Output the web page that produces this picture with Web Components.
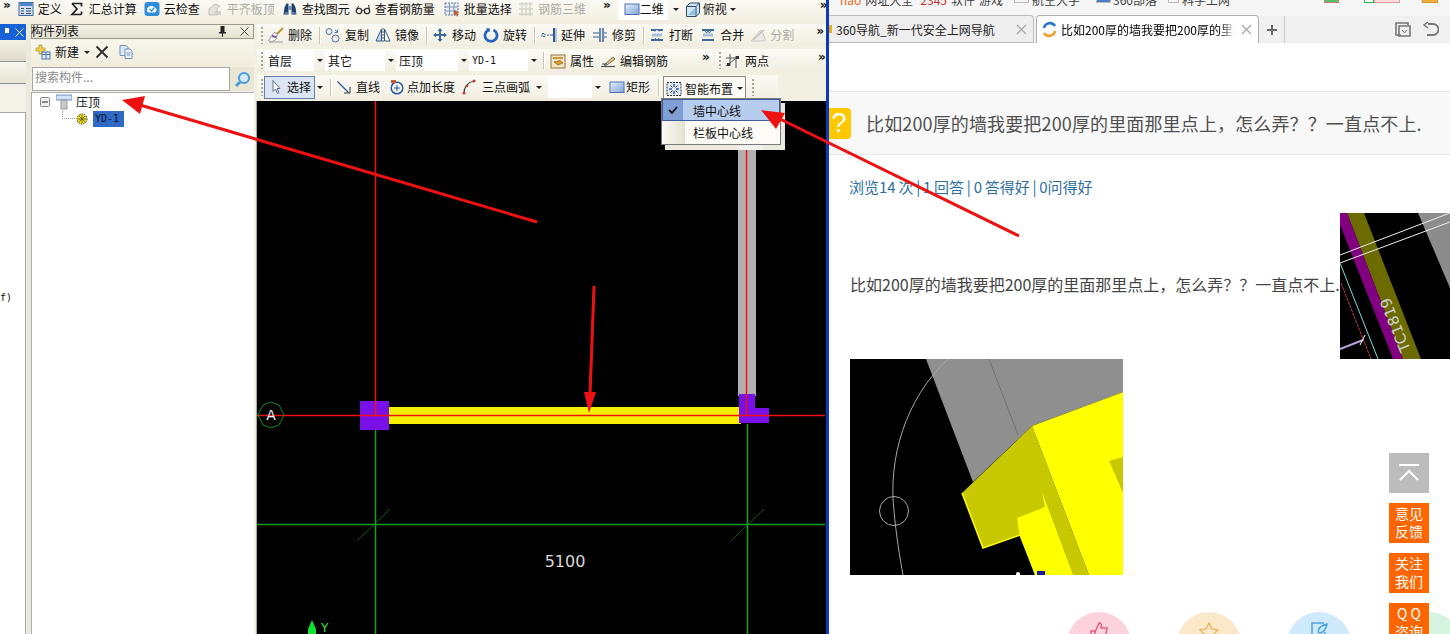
<!DOCTYPE html>
<html lang="zh">
<head>
<meta charset="utf-8">
<title>压顶</title>
<style>
  html, body { margin: 0; height: 100%; overflow: hidden; background: #fff; }
  body { font: 12px "Noto Sans CJK SC", "Liberation Sans", sans-serif; }
</style>
</head>
<body>
<page-shell></page-shell>
<script>
/**
 * Small helper, every element gets an open shadow root cloned from a template.
 *
 * @param {string} name - Tag name.
 * @param {string} html - Shadow markup with its style.
 * @param {Function} [setup] - Called when the element is connected.
 */
function define (name, html, setup) {
  const template = document.createElement('template')
  template.innerHTML = html
  customElements.define(name, class extends HTMLElement {
    constructor () {
      super()
      this.attachShadow({ mode: 'open' }).appendChild(template.content.cloneNode(true))
    }

    connectedCallback () {
      if (setup) setup(this)
    }
  })
}

// 16x16 toolbar icons
const icons = {
  define: '<rect x="1" y="1.5" width="14" height="13" fill="#cfe0f5" stroke="#3d6fa8"/><rect x="1.5" y="2" width="13" height="3" fill="#4f86c6"/><path d="M3 7.5h3M3 10h3M3 12.5h3M8 7.5h5M8 10h5M8 12.5h5" stroke="#3d4f66"/>',
  sigma: '<path d="M3 2.5h9.5v3M12.5 13.500v-3M12.500 13.500H3l5-5.500-5-5.500" fill="none" stroke="#222" stroke-width="1.700"/>',
  cloud: '<rect x="0.500" y="1" width="15" height="14" rx="3" fill="#2f8fdc"/><path d="M3 9c0-3 3-4.500 5-4 2 .5 4 1.500 4.500 3.500 0 2-1 3-3 3H5c-1.500 0-2-1-2-2.500z" fill="#fff"/><path d="M5.500 8l2 2 3-3.500" fill="none" stroke="#2f8fdc" stroke-width="1.400"/>',
  align: '<path d="M2 14V8l6-5 5 2-3 3v6z" fill="#e2e2dc" stroke="#c2c2ba"/><path d="M8 14h6v-4H8z" fill="#d0d0c8"/>',
  binoculars: '<path d="M1.500 13.500l1-7 2-4h2v11zM14.500 13.500l-1-7-2-4h-2v11z" fill="#1d3f70"/><rect x="6.500" y="5" width="3" height="4" fill="#6f8fb8"/><path d="M2.500 12h4M9.500 12h4" stroke="#8fb0d8"/>',
  glasses: '<circle cx="4" cy="10" r="2.700" fill="none" stroke="#333" stroke-width="1.300"/><circle cx="12" cy="10" r="2.700" fill="none" stroke="#333" stroke-width="1.300"/><path d="M6.500 10c1-1 2-1 3 0M1.500 9l2-4M14.500 9l-1-5" fill="none" stroke="#333"/>',
  batch: '<rect x="1" y="2" width="13" height="12" fill="#e9eef6" stroke="#5f7fa6" stroke-dasharray="2 1"/><path d="M1 6h13M1 10h13M5.500 2v12M10 2v12" stroke="#7f96b5"/><path d="M10 9l5 3-2 1 1 2-1 .5-1-2-2 1z" fill="#c8582a"/>',
  rebar3d: '<path d="M1 3h14M1 8h14M1 13h14M4 1v14M8 1v14M12 1v14" stroke="#c6c6be"/>',
  rect: '<defs><linearGradient id="g" x1="0" y1="0" x2="1" y2="1"><stop offset="0" stop-color="#e6effb"/><stop offset="1" stop-color="#7fa3dc"/></linearGradient></defs><rect x="1" y="3" width="14" height="10.500" fill="url(#g)" stroke="#4f73ad"/>',
  cube: '<path d="M1.500 5.500L5 2h9.500v10L11 15.500H1.500z" fill="#cfe6f6" stroke="#2d4a66"/><path d="M1.500 5.500H11v10M11 5.500L14.500 2" fill="none" stroke="#2d4a66"/><path d="M3 14l7-7v7z" fill="#8fc3e6"/>',
  del: '<path d="M15 1L8 8" stroke="#c8912f" stroke-width="2"/><path d="M9.500 6.500l-3-1-3.500 4c-.5 2-2 3-2.500 4 2 1.500 6 1 7.500-1.500z" fill="#fff" stroke="#707070" stroke-width=".8"/><path d="M4 9l4 1" stroke="#7c4fb0" stroke-width="2"/><path d="M1 15h14" stroke="#9b9b9b"/>',
  copy: '<circle cx="4" cy="4.500" r="3" fill="#e8eff7" stroke="#58708e"/><circle cx="10.500" cy="11.500" r="3.500" fill="#e8eff7" stroke="#58708e"/><path d="M10 3l2.500 2M12.500 2.500v3h-3" fill="none" stroke="#3a79bd"/>',
  mirror: '<path d="M6.500 2v12H1z" fill="#c6d8ee" stroke="#34587f"/><path d="M9.500 2v12H15z" fill="#fff" stroke="#34587f"/><path d="M8 1v14" stroke="#34587f" stroke-dasharray="2 1"/>',
  move: '<path d="M8 1l2.500 3H9v3h3V5.500L15 8l-3 2.500V9H9v3h1.500L8 15l-2.500-3H7V9H4v1.500L1 8l3-2.500V7h3V4H5.500z" fill="#3d6a9e"/>',
  rotate: '<path d="M5.500 3a6 6 0 1 0 5 0" fill="none" stroke="#2a63c2" stroke-width="2.800"/><path d="M3 1l4 .5-.5 4z" fill="#2a63c2"/>',
  extend: '<path d="M1 6.500h3v3H1zM6 8h4" fill="none" stroke="#2a5aa0" stroke-dasharray="2 1"/><path d="M13 1v14" stroke="#2a5aa0" stroke-width="2"/><path d="M10 8h2" stroke="#2a5aa0"/><path d="M15 1v14" stroke="#7f9cc8"/>',
  trim: '<path d="M8 1v14M11 1v14" stroke="#2a5aa0" stroke-width="1.400"/><path d="M1 6h6M1 10h6M12 6h3M12 10h3" stroke="#2a5aa0"/>',
  break: '<path d="M2 3h5M9 3h5M2 13h12" stroke="#3d6a9e" stroke-width="2"/><path d="M3 8h10" stroke="#a9bfd8" stroke-width="3"/><path d="M6 4.500L8 2l2 2.500M6 11l2 2.500 2-2.500" fill="none" stroke="#3d6a9e"/>',
  merge: '<path d="M2 3h12M2 13h12" stroke="#3d6a9e" stroke-width="2"/><path d="M3 8h10" stroke="#a9bfd8" stroke-width="3"/><path d="M5 4l1.500 2L8 4M8 4l1.500 2L11 4" fill="none" stroke="#3d6a9e"/>',
  split: '<path d="M1 14h14v-3L11 3z" fill="#ecece6" stroke="#c6c6be"/><path d="M3 13l11-10" stroke="#c6c6be" stroke-width="1.500"/>',
  props: '<rect x="1" y="2" width="14" height="13" fill="#f4e6c4" stroke="#94743c"/><path d="M3 5h10" stroke="#c89a3c" stroke-width="2"/><path d="M4 9l4 3 5-2-3-2.500z" fill="#d89b2c" stroke="#74521e" stroke-width=".6"/>',
  edit: '<path d="M1 13.500h14" stroke="#555" stroke-width="1.200"/><path d="M4 12l9-8 2 2-9 6.500z" fill="#d8c69a" stroke="#8a6d3a"/><path d="M2 11h5" stroke="#2e4f78"/>',
  twopts: '<path d="M1 13L14 3M5 1v12M11 3v12M1 5h12" stroke="#555" fill="none"/><rect x="2" y="10" width="3" height="3" fill="#333"/><rect x="11" y="3" width="3" height="3" fill="#333"/>',
  cursor: '<path d="M5 1.500v11l2.500-2.500 2 4.500 1.500-.7-2-4.300H12z" fill="#fff" stroke="#5f7490"/>',
  line: '<path d="M1.500 2.500l11 11" stroke="#2a5aa0" stroke-width="1.200"/><path d="M14 8v6H8" fill="none" stroke="#333"/>',
  ptlen: '<circle cx="8" cy="9" r="5.800" fill="none" stroke="#2a5aa0" stroke-width="1.500"/><path d="M8 6v6M5 9h6" stroke="#2a5aa0"/><path d="M2 1h5v3H2z" fill="#c85a38"/>',
  arc3: '<path d="M3 14C3 8 7 3 13 2" fill="none" stroke="#444" stroke-width="1.200"/><circle cx="3" cy="14" r="1.500" fill="#c83838"/><circle cx="6" cy="7" r="1.300" fill="#c83838"/><circle cx="13" cy="2" r="1.500" fill="#c83838"/>',
  smart: '<rect x="1" y="1.500" width="14" height="13" fill="#e3ebf7" stroke="#333" stroke-dasharray="2 1"/><path d="M8 3v3M8 10v3M3 8h3M10 8h3" stroke="#2a5aa0" stroke-width="1.500"/><path d="M4.500 4.500l2 2M11.500 4.500l-2 2M4.500 11.500l2-2M11.500 11.500l-2-2" stroke="#333"/>',
  newpart: '<path d="M1 4h3V1h3v3h3v3H7v3H4V7H1z" fill="#f2cf52" stroke="#b59227" stroke-width=".7"/><rect x="7" y="8" width="8" height="7" fill="#e3edf9" stroke="#4f78ad"/><path d="M7 10.500h8M11 8v7" stroke="#4f78ad"/>',
  xmark: '<path d="M2.500 2.500l11 11M13.500 2.500l-11 11" stroke="#2b2b2b" stroke-width="1.800"/>',
  docs: '<path d="M2 1.500h6l2 2v8H2z" fill="#dbe8f8" stroke="#6e8fb8"/><path d="M7 5h5l2 2v7.500H7z" fill="#f2f6fc" stroke="#6e8fb8"/><path d="M8.500 9h4M8.500 11h4" stroke="#6e8fb8"/>'
}

define('tool-btn', `
  <style>
    :host { display: inline-flex; align-items: center; gap: 4px; padding: 0 3px; height: 100%; white-space: nowrap; line-height: 1; flex: none; }
    :host([disabled]) { color: #adada5; }
    svg { width: 16px; height: 16px; flex: none; }
    .caret { width: 0; height: 0; border: 3px solid transparent; border-top: 3px solid #222; border-bottom: 0; display: none; margin-left: 1px; }
    :host([caret]) .caret { display: block; }
  </style>
  <svg viewBox="0 0 16 16"></svg><slot></slot><i class="caret"></i>
`, el => {
  el.shadowRoot.querySelector('svg').innerHTML = icons[el.getAttribute('icon')] || ''
})

define('tool-sep', `
  <style>:host { display: block; flex: none; width: 1px; height: 17px; margin: 0 2px 0 4px; background: #c8c5b5; border-right: 1px solid #fff; box-sizing: content-box; }</style>
`)

define('tool-grip', `
  <style>:host { display: block; flex: none; width: 2px; height: 17px; margin: 0 3px 0 4px; background: repeating-linear-gradient(#a8a698 0 2px, transparent 2px 4px); }</style>
`)

define('tool-more', `
  <style>:host { display: block; flex: none; font: bold 12px/1 "DejaVu Sans", sans-serif; color: #111; letter-spacing: -1px; transform: translateY(-4px); }</style>
  &raquo;
`)

define('tool-combo', `
  <style>
    :host { display: flex; flex: none; align-items: center; height: 21px; }
    .txt { flex: 1; height: 100%; background: #fff; display: flex; align-items: center; padding-left: 3px; box-sizing: border-box; white-space: nowrap; }
    .arr { flex: none; width: 11px; display: flex; justify-content: center; }
    i { border: 3px solid transparent; border-top: 3px solid #222; border-bottom: 0; }
  </style>
  <div class="txt"><slot></slot></div><div class="arr"><i></i></div>
`)

define('cad-toolbar', `
  <style>
    :host { display: flex; align-items: center; flex: none; box-sizing: border-box; background: linear-gradient(#fbfaf4, #f1eee0); white-space: nowrap; }
  </style>
  <slot></slot>
`)

define('smart-menu', `
  <style>
    :host { display: block; position: absolute; left: 404px; top: 74px; width: 118px; height: 45px; background: #fcfbf6; border: 1px solid #7a7a7a; box-shadow: 4px 5px 0 rgba(248, 246, 236, .95); z-index: 3; }
    .strip { position: absolute; left: 0; top: 0; bottom: 0; width: 23px; background: linear-gradient(90deg, #fbfaf5, #e4e1d0); }
    .row { position: relative; height: 22px; display: flex; align-items: center; padding-left: 31px; }
    .on { background: #b7cdee; outline: 1px solid #3c5c9c; outline-offset: -1px; }
    .chk { position: absolute; left: 1px; top: 1px; bottom: 1px; width: 20px; background: #7f9fd6; display: flex; align-items: center; justify-content: center; }
  </style>
  <div class="strip"></div>
  <div class="row on"><span class="chk"><svg width="10" height="8" viewBox="0 0 10 8"><path d="M1 4l3 3 5-6" fill="none" stroke="#111" stroke-width="1.800"/></svg></span>墙中心线</div>
  <div class="row">栏板中心线</div>
`)

define('cad-canvas', `
  <style>
    :host { display: block; flex: 1; min-height: 0; background: #000; box-shadow: -1px 0 0 #a8a8a8; }
    svg { display: block; }
    text { font-family: "DejaVu Sans", sans-serif; }
  </style>
  <svg width="568" height="533" viewBox="257 101 568 533">
    <rect x="738" y="146" width="18" height="250" fill="#b0b0b0"/>
    <rect x="743" y="145" width="20" height="5" fill="#5b9be0"/>
    <rect x="389" y="407" width="352" height="17" fill="#f5f000"/>
    <rect x="360" y="401" width="29" height="29" fill="#7a10e8"/>
    <path d="M739 394h16v14h14v15h-30z" fill="#7a10e8"/>
    <path d="M375.500 430V634M747.500 424V634M257 524.500H825" stroke="#14a01a" stroke-width="1.500"/>
    <path d="M357 541l33-32M731 541l33-32" stroke="#0f7a14" stroke-width=".8"/>
    <path d="M375.500 101V415M746.500 150V415M257 415.500H825" stroke="#f01010" stroke-width="1.500"/>
    <polygon points="271,402 279,405 284,415 279,425 271,428 263,425 258,415 263,405" fill="none" stroke="#128a18"/>
    <text x="271" y="420" text-anchor="middle" font-size="14" fill="#f2f2f2">A</text>
    <text x="565" y="567" text-anchor="middle" font-size="16" fill="#d8d8d8">5100</text>
    <path d="M312 620l4 9v5h-8v-5z" fill="#10e030"/>
    <text x="321" y="632" font-size="12" fill="#3ce04a">Y</text>
  </svg>
`)

define('part-panel', `
  <style>
    :host { display: flex; flex-direction: column; flex: none; width: 223px; min-height: 0; }
    .title { flex: none; height: 13px; line-height: 13px; margin-bottom: 1px; background: linear-gradient(#f5f3e8, #e2dfce); border: 1px solid #9a9a8c; display: flex; align-items: center; justify-content: space-between; }
    .title b { font-weight: normal; font-size: 12px; margin-left: -1px; padding-bottom: 2px; }
    .title span { display: flex; gap: 13px; padding-right: 4px; align-items: center; font-size: 11px; color: #333; }
    .tools { flex: none; height: 26px; display: flex; align-items: center; box-sizing: border-box; padding: 0 0 2px 1px; background: linear-gradient(#f8f6ec, #f0eddd); }
    .tools tool-btn { padding-right: 0; }
    .icon { width: 16px; height: 16px; display: block; }
    .search { flex: none; height: 24px; display: flex; margin: 1px 0; padding-left: 1px; background: #f0eddd; }
    .search div { flex: 1; background: #fff; border: 1px solid #a6a6a0; box-sizing: border-box; color: #8a8a8a; line-height: 18px; padding-left: 2px; }
    .search span { flex: none; width: 24px; display: flex; align-items: center; justify-content: center; background: #e9e6d6; }
    .tree { flex: 1; background: #fff; border: 1px solid #a9adb4; border-width: 1px 0 0 1px; padding: 0 0 0 8px; }
    .node { height: 17px; display: flex; align-items: center; }
    .mono { font: 10px/16px "DejaVu Sans Mono", monospace; color: #06122e; background: #316ac5; width: 31px; height: 16px; padding-left: 2px; box-sizing: border-box; }
    .dots { width: 13px; height: 8px; margin-left: 22px; border: 1px dotted #9a9a9a; border-width: 0 0 1px 1px; margin-top: -8px; box-sizing: border-box; }
  </style>
  <div class="title"><b>构件列表</b><span><svg width="9" height="11" viewBox="0 0 9 11"><path d="M2.500 0h4v6H8v1.500H5V11H4V7.500H1V6h1.500z" fill="#222"/></svg><svg width="9" height="9" viewBox="0 0 9 9"><path d="M.5 .5l8 8M8.500 .5l-8 8" stroke="#444"/></svg></span></div>
  <div class="tools">
    <tool-btn icon="newpart" caret>新建</tool-btn>
    <svg class="icon" style="margin-left:4px" viewBox="0 0 16 16"></svg>
    <svg class="icon" style="margin-left:8px" viewBox="0 0 16 16"></svg>
  </div>
  <div class="search">
    <div>搜索构件...</div>
    <span><svg width="17" height="17" viewBox="0 0 17 17"><circle cx="10" cy="7" r="5" fill="#d4e8f8" stroke="#4a9ad8" stroke-width="2"/><path d="M6 11l-4 4" stroke="#4a9ad8" stroke-width="3"/></svg></span>
  </div>
  <div class="tree">
    <div class="node">
      <svg width="10" height="10" viewBox="0 0 10 10"><rect x=".5" y=".5" width="9" height="9" rx="1" fill="#eee" stroke="#888"/><path d="M2 5h6" stroke="#222"/></svg>
      <svg style="margin:0 4px 0 6px" width="16" height="16" viewBox="0 0 16 16"><rect x="0" y="1" width="16" height="5" fill="#cfe0f8" stroke="#6f93c8"/><rect x="5" y="6" width="6" height="9" fill="#c9c9c9" stroke="#9a9a9a"/></svg>
      压顶
    </div>
    <div class="node">
      <span class="dots"></span>
      <svg style="margin:0 5px 0 1px" width="12" height="12" viewBox="0 0 12 12"><circle cx="6" cy="6" r="5" fill="#f5e61e" stroke="#333" stroke-dasharray="1.500 1"/><path d="M6 2v8M2 6h8M3 3l6 6M9 3l-6 6" stroke="#55520a" stroke-width=".8"/></svg>
      <span class="mono">YD-1</span>
    </div>
  </div>
`, el => {
  const marks = el.shadowRoot.querySelectorAll('.icon')
  marks[0].innerHTML = icons.xmark
  marks[1].innerHTML = icons.docs
})

define('dock-stub', `
  <style>
    :host { display: flex; flex-direction: column; flex: none; width: 26px; border-right: 5px solid #eceadb; box-sizing: content-box; background: #f7f6ef; }
    .bar { height: 16px; background: #1660d8; color: #fff; display: flex; justify-content: flex-end; align-items: center; gap: 6px; padding-right: 2px; font-size: 10px; }
    .a { height: 21px; background: linear-gradient(#f3f1e6, #dedbc9); border-bottom: 1px solid #8f9295; }
    .b { height: 21px; background: linear-gradient(#f9f8f0, #e6e3d3); border-bottom: 1px solid #8f9295; }
    .c { height: 28px; background: #f5f3e9; border-bottom: 1px solid #a3a7ae; }
    .d { flex: 1; background: #fff; position: relative; border-right: 1px solid #a3a7ae; }
    .d span { position: absolute; left: 0; top: 179px; font: 10px/12px "DejaVu Sans Mono", monospace; }
  </style>
  <div class="bar"><svg width="5" height="8" viewBox="0 0 5 8"><path d="M1 0h4v5H1z" fill="#fff"/></svg><svg width="9" height="9" viewBox="0 0 9 9"><path d="M.5 .5l8 8M8.500 .5l-8 8" stroke="#fff"/></svg></div>
  <div class="a"></div><div class="b"></div><div class="c"></div>
  <div class="d"><span>f)</span></div>
`)

define('cad-app', `
  <style>
    :host { display: flex; flex-direction: column; flex: none; width: 826px; height: 634px; background: #f2efe3; color: #111; overflow: hidden; }
    .top { height: 24px; padding-bottom: 6px; }
    .body { flex: 1; min-height: 0; display: flex; }
    .main { position: relative; flex: 1; min-width: 0; margin-left: 3px; display: flex; flex-direction: column; }
    .r1 { height: 22px; margin-bottom: 3px; }
    .r2 { height: 23px; margin-bottom: 3px; background: none; }
    .r3 { height: 26px; width: 521px; padding-bottom: 2px; }
    .seg { display: flex; align-items: center; height: 100%; background: linear-gradient(#fbfaf4, #f1eee0); }
    .picked { box-sizing: border-box; height: 23px; width: 51px; background: #dbe5f3; border: 1px solid #6480a8; padding: 0; }
    .smart { box-sizing: border-box; height: 24px; margin-top: 2px; background: #fbfaf4; border: 1px solid #8c8c84; border-bottom: 0; padding: 0 2px; gap: 3px; }
    .arrow { border: 3px solid transparent; border-top: 3px solid #222; border-bottom: 0; flex: none; }
    .two { background: #fff; height: 22px; padding-right: 4px; }
  </style>
  <cad-toolbar class="top">
    <tool-more style="margin-left:3px;margin-right:5px"></tool-more>
    <tool-btn icon="define">定义</tool-btn>
    <tool-btn icon="sigma" style="margin-left:1px">汇总计算</tool-btn>
    <tool-btn icon="cloud" style="margin-left:1px">云检查</tool-btn>
    <tool-btn icon="align" disabled style="margin-left:1px">平齐板顶</tool-btn>
    <tool-btn icon="binoculars" style="margin-left:1px">查找图元</tool-btn>
    <tool-btn icon="glasses" style="margin-left:-1px">查看钢筋量</tool-btn>
    <tool-btn icon="batch" style="margin-left:3px">批量选择</tool-btn>
    <tool-btn icon="rebar3d" disabled>钢筋三维</tool-btn>
    <tool-more style="margin-left:14px;margin-right:6px"></tool-more>
    <tool-btn icon="rect" class="two" style="margin-left:2px;padding-left:6px;gap:0">二维</tool-btn>
    <i class="arrow" style="margin-left:5px"></i>
    <tool-btn icon="cube" style="margin-left:3px;gap:2px" caret>俯视</tool-btn>
    <tool-more style="margin-left:81px"></tool-more>
  </cad-toolbar>
  <div class="body">
    <dock-stub></dock-stub>
    <part-panel></part-panel>
    <div class="main">
      <cad-toolbar class="r1">
        <tool-grip style="margin-right:2px"></tool-grip>
        <tool-btn icon="del">删除</tool-btn>
        <tool-sep style="margin-right:1px"></tool-sep>
        <tool-btn icon="copy">复制</tool-btn>
        <tool-btn icon="mirror">镜像</tool-btn>
        <tool-sep style="margin:0 1px 0 4px"></tool-sep>
        <tool-btn icon="move">移动</tool-btn>
        <tool-btn icon="rotate" style="margin-left:1px">旋转</tool-btn>
        <tool-sep></tool-sep>
        <tool-btn icon="extend">延伸</tool-btn>
        <tool-btn icon="trim" style="margin-left:1px">修剪</tool-btn>
        <tool-sep style="margin-right:1px"></tool-sep>
        <tool-btn icon="break">打断</tool-btn>
        <tool-btn icon="merge" style="margin-left:1px">合并</tool-btn>
        <tool-btn icon="split" disabled>分割</tool-btn>
        <tool-more style="margin-left:19px"></tool-more>
      </cad-toolbar>
      <cad-toolbar class="r2">
        <div class="seg" style="width:457px">
          <tool-grip style="margin-right:2px"></tool-grip>
          <tool-combo style="width:60px">首层</tool-combo>
          <tool-combo style="width:71px">其它</tool-combo>
          <tool-combo style="width:73px">压顶</tool-combo>
          <tool-combo style="width:70px;font:10px 'DejaVu Sans Mono',monospace">YD-1</tool-combo>
          <tool-sep></tool-sep>
          <tool-btn icon="props">属性</tool-btn>
          <tool-btn icon="edit">编辑钢筋</tool-btn>
          <tool-more style="margin-left:31px"></tool-more>
        </div>
        <div class="seg" style="flex:1;margin-left:1px">
          <tool-grip style="margin-right:1px"></tool-grip>
          <tool-btn icon="twopts">两点</tool-btn>
          <tool-more style="margin-left:46px"></tool-more>
        </div>
      </cad-toolbar>
      <cad-toolbar class="r3">
        <tool-grip style="margin-right:1px"></tool-grip>
        <tool-btn icon="cursor" class="picked" style="padding-left:3px;gap:3px">选择</tool-btn>
        <i class="arrow" style="margin-left:2px"></i>
        <tool-sep style="margin:0 1px 0 7px"></tool-sep>
        <tool-btn icon="line">直线</tool-btn>
        <tool-btn icon="ptlen" style="margin-left:3px;gap:2px">点加长度</tool-btn>
        <tool-btn icon="arc3" style="gap:5px" caret>三点画弧</tool-btn>
        <tool-combo style="width:55px;margin-left:3px;height:22px"></tool-combo>
        <tool-btn icon="rect" style="margin-left:3px;gap:1px">矩形</tool-btn>
        <tool-sep style="margin:0 3px 0 5px"></tool-sep>
        <tool-btn icon="smart" class="smart" caret>智能布置</tool-btn>
        <tool-grip style="margin-left:6px"></tool-grip>
      </cad-toolbar>
      <cad-canvas></cad-canvas>
      <smart-menu></smart-menu>
    </div>
  </div>
`)

define('browser-tab', `
  <style>
    :host { display: flex; align-items: center; flex: none; box-sizing: border-box; height: 28px; background: #eeeeee; border: 1px solid #bdbdbd; border-left: 0; border-bottom: 1px solid #b5b5b5; border-radius: 0 4px 0 0; position: relative; color: #222; }
    :host([active]) { background: #fff; border: 1px solid #b0b0b0; border-bottom: 0; border-radius: 4px 4px 0 0; color: #000; }
    .txt { flex: 1; min-width: 0; overflow: hidden; white-space: nowrap; }
    :host([active]) .txt { -webkit-mask-image: linear-gradient(90deg, #000 92%, transparent); mask-image: linear-gradient(90deg, #000 92%, transparent); }
    .x { flex: none; width: 11px; height: 11px; margin: 0 6px; }
  </style>
  <slot name="icon"></slot>
  <div class="txt"><slot></slot></div>
  <svg class="x" viewBox="0 0 11 11"><path d="M1 1l9 9M10 1l-9 9" stroke="#a8a8a8" stroke-width="1.300"/></svg>
`)

define('rail-btn', `
  <style>
    :host { display: flex; align-items: center; justify-content: center; flex: none; width: 40px; height: 40px; box-sizing: border-box; padding-bottom: 3px; background: #ff6600; color: #fff; font-size: 14px; line-height: 18px; text-align: center; }
    :host([plain]) { background: #bcbcbc; padding-bottom: 0; }
  </style>
  <slot></slot>
`)

define('side-rail', `
  <style>:host { display: flex; flex-direction: column; gap: 10px; position: absolute; left: 560px; top: 453px; z-index: 2; }</style>
  <rail-btn plain><svg width="22" height="18" viewBox="0 0 22 18"><path d="M1 1h20M2 16l9-9 9 9" fill="none" stroke="#fff" stroke-width="2"/></svg></rail-btn>
  <rail-btn>意见<br>反馈</rail-btn>
  <rail-btn>关注<br>我们</rail-btn>
  <rail-btn>Q Q<br>咨询</rail-btn>
`)

define('action-circle', `
  <style>
    :host { display: flex; justify-content: center; flex: none; width: 64px; height: 64px; border-radius: 50%; background: var(--tint); padding-top: 10px; box-sizing: border-box; }
  </style>
  <slot></slot>
`)

define('question-page', `
  <style>
    :host { display: block; flex: 1; min-height: 0; background: #fff; color: #444; overflow: hidden; }
    .head { margin-top: 48px; height: 64px; box-sizing: border-box; background: #f8f8f8; border: 1px solid #e6e6e6; border-width: 1px 0; display: flex; align-items: center; }
    .mark { flex: none; width: 28px; height: 31px; margin-left: -6px; border-radius: 4px; background: #ffc800; color: #fff; font: 27px/31px "Liberation Sans", sans-serif; text-align: center; padding-left: 4px; box-sizing: border-box; }
    h1 { margin: 0 0 0 15px; font-size: 18px; font-weight: normal; white-space: nowrap; color: #505050; letter-spacing: .14px; }
    .stats { margin: 22px 0 16px 20px; font-size: 15px; line-height: 20px; color: #2c6ea3; white-space: nowrap; word-spacing: -.6px; }
    .para { display: flex; align-items: center; margin-left: 21px; width: 640px; }
    .para p { flex: none; width: 490px; margin: 0 0 4px; font-size: 16px; white-space: nowrap; color: #444; }
    svg { display: block; flex: none; }
    .big { margin-left: 21px; }
    .acts { display: flex; gap: 46px; margin: 37px 0 0 238px; width: 400px; }
    text { font-family: "DejaVu Sans", sans-serif; }
  </style>
  <div class="head"><div class="mark">?</div><h1>比如200厚的墙我要把200厚的里面那里点上，怎么弄？？一直点不上.</h1></div>
  <div class="stats">浏览14 次 | 1 回答 | 0 答得好 | 0问得好</div>
  <div class="para">
    <p>比如200厚的墙我要把200厚的里面那里点上，怎么弄？？一直点不上.</p>
    <svg width="110" height="146" viewBox="0 0 110 146">
      <rect width="110" height="146" fill="#000"/>
      <polygon points="78,0 110,0 110,75" fill="#8c8c8c"/>
      <polygon points="7,0 24,0 81,146 63,146" fill="#6b6b00"/>
      <polygon points="0,0 7,0 63,146 53,146 0,12" fill="#800080"/>
      <path d="M0 42L110 0M0 50L110 9" stroke="#f0f0f0"/>
      <path d="M0 50L38 146" stroke="#7fdcd0"/>
      <path d="M1 70L31 146" stroke="#d04040" stroke-dasharray="3 1"/>
      <path d="M0 136L23 127" stroke="#b9a3e0" stroke-width="2"/>
      <path d="M20 132L25 122" stroke="#fff"/>
      <text x="0" y="0" transform="translate(60 110) rotate(-112)" text-anchor="middle" font-size="15" fill="#d0d0d0">TC1819</text>
    </svg>
  </div>
  <svg class="big" width="273" height="216" viewBox="0 0 273 216">
    <rect width="273" height="216" fill="#000"/>
    <polygon points="76,0 273,0 273,33 182,67 123,123" fill="#8f8f8f"/>
    <path d="M139 0L168 76" stroke="#6a6a6a" stroke-width=".8"/>
    <path d="M98 0C55 40 38 100 44 152C46 175 50 200 53 216" fill="none" stroke="#a8a8a8"/>
    <circle cx="44" cy="152" r="14.500" fill="none" stroke="#a8a8a8"/>
    <polygon points="112,134 182,67 239,216 185,216 170,176 133,189" fill="#c8c800"/>
    <path d="M112 134L133 189L170 176" fill="none" stroke="#ffff00" stroke-width="1.500"/>
    <polygon points="182,67 273,33 273,216 239,216" fill="#ffff00"/>
    <polygon points="167,159 195,148 192,133 223,216 185,216 170,178" fill="#ffff00"/>
    <polygon points="259,102 273,98 273,134" fill="#c8c800"/>
    <circle cx="168" cy="215" r="2" fill="#fff"/>
    <rect x="187" y="212" width="8" height="4" fill="#1a1aa0"/>
  </svg>
  <div class="acts">
    <action-circle style="--tint:#fcd3dc"><svg width="18" height="20" viewBox="0 0 18 20"><path d="M1 9h4v10H1zM5 10l4-9c2 0 3 1 2 5h6l-2 13H5" fill="none" stroke="#e0607c" stroke-width="1.500"/></svg></action-circle>
    <action-circle style="--tint:#fbe8c8"><svg width="20" height="20" viewBox="0 0 20 20"><path d="M10 1l3 6 6 1-4.500 4.500 1 6.500-5.500-3-5.500 3 1-6.500L1 8l6-1z" fill="none" stroke="#e8b45c" stroke-width="1.300"/></svg></action-circle>
    <action-circle style="--tint:#cfeafa"><svg width="18" height="20" viewBox="0 0 18 20"><path d="M14 1H2v18h13v-9M8 11c0-5 4-8 9-9-1 5-3 9-8 9" fill="none" stroke="#4aa4e0" stroke-width="1.500"/></svg></action-circle>
    <action-circle style="--tint:#d5f5e0"></action-circle>
  </div>
`)

define('browser-pane', `
  <style>
    :host { display: flex; flex-direction: column; flex: none; width: 621px; height: 634px; position: relative; overflow: hidden; background: #fff; }
    .marks { flex: none; height: 16px; background: #f6f6f6; position: relative; overflow: hidden; color: #444; }
    .marks div { display: flex; align-items: center; height: 12px; margin-top: -7px; white-space: nowrap; padding-left: 11px; }
    .marks span { flex: none; }
    .marks i { flex: none; display: block; height: 9px; border: 1px solid #bbb; margin-top: -3px; }
    .tabs { flex: none; display: flex; align-items: flex-end; background: #f0f0f0; border-bottom: 1px solid #b5b5b5; box-sizing: content-box; margin-bottom: -1px; height: 27px; }
    .fav { display: block; width: 3px; height: 8px; background: #e8b020; }
    .ctl { flex: none; display: flex; align-items: center; height: 27px; }
  </style>
  <div class="marks"><div>
    <span style="color:#e8661a">hao</span><span style="margin-left:4px">网址大全</span>
    <span style="margin-left:7px;color:#c03030">2345</span><span style="margin-left:4px">软件</span>
    <span style="margin-left:4px">游戏</span>
    <i style="width:13px;margin-left:11px"></i><span style="margin-left:3px">航空大学</span>
    <i style="width:13px;margin-left:16px;background:#4a7fc8"></i><span style="margin-left:2px">360部落</span>
    <i style="width:9px;margin-left:11px"></i><span style="margin-left:3px">科学上网</span>
    <i style="width:13px;margin-left:94px;background:#4cc46c;border-color:#e07070"></i>
    <i style="width:8px;margin-left:25px;background:#fff;border-color:#2cb44c"></i>
    <i style="width:24px;background:#fbdcdc;border-color:#dca0a0"></i>
    <i style="width:14px;margin-left:22px;background:#f0b040;border-color:#d89020"></i>
  </div></div>
  <div class="tabs">
    <browser-tab style="width:205px">
      <i class="fav" slot="icon" style="margin-right:4px"></i>360导航_新一代安全上网导航
    </browser-tab>
    <browser-tab active style="width:223px;margin-left:2px;padding-left:4px">
      <svg slot="icon" width="17" height="17" viewBox="0 0 17 17" style="margin-right:3px"><path d="M3 7a6 6 0 0 1 11-2" fill="none" stroke="#2a74c8" stroke-width="2.600"/><path d="M14 10a6 6 0 0 1-11 2" fill="none" stroke="#f0a030" stroke-width="2.600"/></svg>
      比如200厚的墙我要把200厚的里面
    </browser-tab>
    <div class="ctl" style="width:25px;justify-content:center;border-right:1px solid #c8c8c8">
      <svg width="12" height="12" viewBox="0 0 12 12"><path d="M6 1v10M1 6h10" stroke="#666" stroke-width="2"/></svg>
    </div>
    <div class="ctl" style="flex:1;justify-content:flex-end;gap:12px;padding-right:11px">
      <svg width="16" height="15" viewBox="0 0 16 15"><path d="M13 3V1H1v12h5M4 4h11v10H4z" fill="none" stroke="#777" stroke-width="1.600"/><path d="M7 8l2.500 3L12 8" fill="none" stroke="#777"/></svg>
      <svg width="16" height="15" viewBox="0 0 16 15"><path d="M5 2H10a4 4 0 0 1 0 11H4" fill="none" stroke="#777" stroke-width="1.800"/><path d="M5 0L1 3l4 3" fill="none" stroke="#777" stroke-width="1.500"/></svg>
    </div>
  </div>
  <question-page></question-page>
  <side-rail></side-rail>
`)

define('note-arrows', `
  <style>
    :host { display: block; position: absolute; left: 0; top: 0; width: 1450px; height: 634px; pointer-events: none; z-index: 5; }
  </style>
  <svg width="1450" height="634" viewBox="0 0 1450 634">
    <g stroke="#ee1111" stroke-width="3">
      <path d="M537 222L140 105"/>
      <path d="M594 286L590 395"/>
      <path d="M1019 236L778 118"/>
    </g>
    <g fill="#ee1111">
      <polygon points="122,100 145,96 140,114"/>
      <polygon points="589,413 584,392 596,392"/>
      <polygon points="761,110 785,113 776,129"/>
    </g>
  </svg>
`)

define('page-shell', `
  <style>
    :host { display: flex; position: relative; width: 1450px; height: 634px; overflow: hidden; }
    .edge { flex: none; width: 3px; background: #0a3ac4; }
  </style>
  <cad-app></cad-app>
  <div class="edge"></div>
  <browser-pane></browser-pane>
  <note-arrows></note-arrows>
`)
</script>
</body>
</html>
